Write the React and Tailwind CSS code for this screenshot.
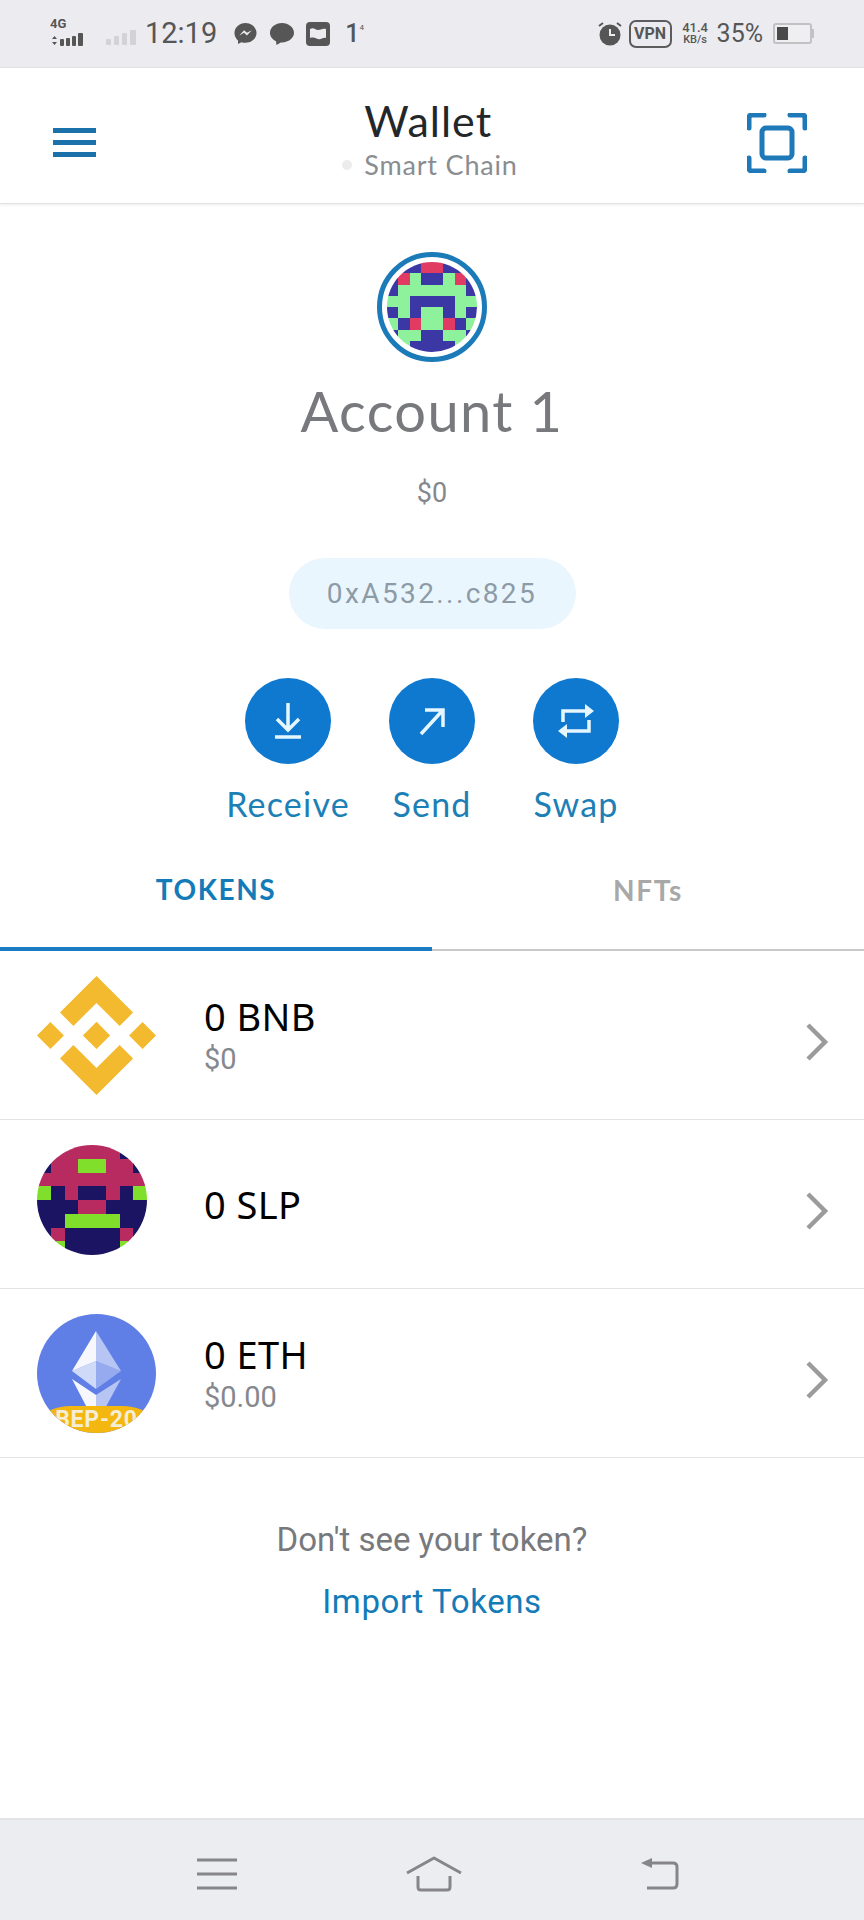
const avatarRows = [
  'xpprrppx',
  'prgppgrp',
  'pggggggp',
  'ggppppgg',
  'pgpggpgp',
  'gprggrpg',
  'pggppggp',
  'ggppppgg',
];
const avatarColors = { p: '#3b38a5', r: '#e13a63', g: '#8df29b' };

const slpRows = [
  'mmmmmmdm',
  'dmmggmmd',
  'mmmmmmmm',
  'gdmddmdg',
  'dddmmddd',
  'ddggggdd',
  'dmddddmd',
  'mgddddgm',
];
const slpColors = { m: '#b72b60', d: '#1b1462', g: '#7fdf2a' };

function PixelGrid({ rows, colors }) {
  return (
    <svg viewBox="0 0 8 8" shapeRendering="crispEdges" className="block w-full h-full">
      {rows.map((row, y) =>
        row.split('').map((c, x) =>
          colors[c] ? <rect key={`${x}-${y}`} x={x} y={y} width="1.02" height="1.02" fill={colors[c]} /> : null
        )
      )}
    </svg>
  );
}

function StatusBar() {
  return (
    <div className="h-[68px] shrink-0 bg-[#ebebf0] border-b border-[#e4e4e8] flex items-center justify-between pl-[50px] pr-[50px] text-[#565656] font-['Roboto',sans-serif]">
      <div className="flex items-center">
        <div className="relative w-[40px] h-[28px]">
          <span className="absolute left-0 top-[-3px] text-[13px] leading-[14px] font-bold">4G</span>
          <svg viewBox="0 0 40 28" className="absolute inset-0 w-[40px] h-[28px]" fill="#565656">
            <path d="M2 19l2.5-3 2.5 3zM2 22h5l-2.500 3z" />
            <rect x="10" y="19" width="4" height="7" rx="1" />
            <rect x="16" y="18" width="4" height="8" rx="1" />
            <rect x="22" y="16" width="4" height="10" rx="1" />
            <rect x="28" y="13" width="5" height="13" rx="1" />
          </svg>
        </div>
        <svg viewBox="0 0 32 16" className="w-[32px] h-[16px] ml-[16px] mt-[8px]" fill="#d3d3d5">
          <rect x="0" y="9" width="5" height="6" rx="1" />
          <rect x="8" y="6" width="5" height="9" rx="1" />
          <rect x="16" y="3" width="5" height="12" rx="1" />
          <rect x="24" y="0" width="6" height="15" rx="1" />
        </svg>
        <span className="ml-[7px] text-[29px] leading-none">12:19</span>
        <svg viewBox="0 0 24 24" className="ml-[17px] w-[23px] h-[23px]" fill="#565656">
          <path d="M12 1C5.600 1 .5 5.600 .5 11.500c0 3.100 1.400 5.800 3.700 7.700V23l3.500-2c1.300 .4 2.800 .6 4.300 .6 6.400 0 11.500-4.600 11.500-10.100S18.400 1 12 1z" />
          <path d="M5.500 14l5-5.500 3 2.800 5-2.800-5 5.500-3-2.800z" fill="#ebebf0" />
        </svg>
        <svg viewBox="0 0 24 24" className="ml-[13px] w-[24px] h-[24px]" fill="#565656">
          <path d="M12 1C5.600 1 0 5.300 0 10.800c0 3.800 2.500 6.900 6 8.500l.5 3.700 4.300-2.600h1.200c6.600 0 12-4.300 12-9.600S18.600 1 12 1z" />
        </svg>
        <svg viewBox="0 0 24 24" className="ml-[12px] w-[24px] h-[24px]">
          <rect x="0" y="0" width="24" height="24" rx="4" fill="#565656" />
          <path d="M4 7c4-2 5 1 8 1s4-2 8-1v9c-3-1-5 2-8 1s-5-2-8-1z" fill="#ebebf0" />
        </svg>
        <span className="ml-[15px] text-[25px] leading-none font-medium">1</span>
        <span className="text-[8px] leading-none mb-[12px]">4</span>
      </div>
      <div className="flex items-center">
        <svg viewBox="0 0 24 24" className="w-[24px] h-[26px] mt-[-2px]">
          <circle cx="12" cy="14" r="10.500" fill="#565656" />
          <path d="M12 8v6h5" fill="none" stroke="#ebebf0" strokeWidth="2" />
          <path d="M1 5l4-3M23 5l-4-3" stroke="#565656" strokeWidth="2" />
        </svg>
        <span className="ml-[7px] h-[28px] w-[43px] rounded-[7px] border-[2.5px] border-[#5c5c5c] flex items-center justify-center text-[16px] font-bold leading-none">VPN</span>
        <div className="ml-[9px] w-[29px] flex flex-col items-center text-[13px] leading-[12px] font-medium">
          <span>41.4</span>
          <span className="text-[11px]">KB/s</span>
        </div>
        <span className="ml-[7px] text-[25px] leading-none">35%</span>
        <div className="ml-[10px] flex items-center">
          <div className="w-[39px] h-[21px] border-2 border-[#c2c2c4] rounded-[3px] bg-[#efeff2] p-[2px]">
            <div className="w-[11px] h-full bg-[#4a4a4a]" />
          </div>
          <div className="w-[2px] h-[9px] bg-[#c2c2c4]" />
        </div>
      </div>
    </div>
  );
}

function Header() {
  return (
    <div className="h-[136px] shrink-0 bg-white border-b border-[#e2e2e2] shadow-[0_1px_3px_rgba(0,0,0,0.08)] grid grid-cols-[1fr_auto_1fr] items-center pl-[53px] pr-[57px]">
      <div className="w-[43px] flex flex-col gap-[7px] mt-[14px]">
        <div className="h-[5px] bg-[#1b72aa]" />
        <div className="h-[5px] bg-[#1b72aa]" />
        <div className="h-[5px] bg-[#1b72aa]" />
      </div>
      <div className="flex flex-col items-start mt-[5px] font-['Lato',sans-serif]">
        <span className="text-[43px] leading-[50px] text-[#24272a] tracking-[1px] ml-[22px]">Wallet</span>
        <div className="mt-[3px] flex items-center text-[27px] leading-[32px] text-[#8a8d90] tracking-[0.8px]">
          <span className="w-[10px] h-[10px] rounded-full bg-[#ececec] mr-[12px]" />
          Smart Chain
        </div>
      </div>
      <svg viewBox="0 0 60 60" className="justify-self-end w-[60px] h-[60px] mt-[14px]" fill="none" stroke="#1f78b8" strokeWidth="5" strokeLinecap="round">
        <path d="M2 15V5q0-3 3-3h12M43 2h12q3 0 3 3v10M58 45v10q0 3-3 3H43M17 58H5q-3 0-3-3V45" />
        <rect x="15" y="15" width="30" height="30" rx="4" />
      </svg>
    </div>
  );
}

function ActionButton({ label, children }) {
  return (
    <div className="w-[144px] flex flex-col items-center">
      <div className="w-[86px] h-[86px] rounded-full bg-[#0e79cf] flex items-center justify-center">
        <svg viewBox="0 0 48 48" className="w-[48px] h-[48px]" fill="none" stroke="#e6f6ff" strokeWidth="3.500">
          {children}
        </svg>
      </div>
      <span className="mt-[19px] text-[34px] leading-[42px] text-[#1c80b6] font-['Lato',sans-serif] tracking-[1.2px]">{label}</span>
    </div>
  );
}

function Chevron() {
  return (
    <svg viewBox="0 0 24 38" className="w-[24px] h-[38px] mt-[14px]" fill="none" stroke="#9b9b9b" strokeWidth="4.500">
      <path d="M3 2l17 17L3 36" />
    </svg>
  );
}

function TokenRow({ icon, name, value }) {
  return (
    <div className="h-[169px] shrink-0 border-b border-[#e3e3e3] flex items-center pl-[37px] pr-[35px]">
      <div className="w-[167px] shrink-0">{icon}</div>
      <div className="flex-1 flex flex-col font-['Noto_Sans',sans-serif]">
        <span className="text-[38px] leading-[46px] text-black tracking-[0.4px]">{name}</span>
        {value && <span className="mt-[2px] text-[29px] leading-[36px] text-[#85888c] font-['Roboto',sans-serif]">{value}</span>}
      </div>
      <Chevron />
    </div>
  );
}

function BnbIcon() {
  return (
    <svg viewBox="0 0 126.610 126.610" className="w-[119px] h-[119px] block" fill="#f3ba2f">
      <path d="M38.730 53.200l24.590-24.580 24.600 24.600 14.300-14.310L63.320 0 24.430 38.900zM0 63.310l14.300-14.310 14.310 14.310-14.310 14.300zM38.730 73.410l24.590 24.580 24.600-24.600 14.310 14.290-38.900 38.910-38.910-38.880-.02-.02zM97.990 63.310l14.300-14.310 14.320 14.300-14.310 14.320zM77.830 63.300L63.320 48.780 52.590 59.510l-1.240 1.230-2.540 2.540 14.510 14.500 14.510-14.470z" />
    </svg>
  );
}

function EthIcon() {
  return (
    <div className="relative w-[119px] h-[119px] rounded-full overflow-hidden bg-[#5f7fe6]">
      <svg viewBox="0 0 119 119" className="absolute inset-0 w-full h-full">
        <path d="M59 17L35 57l24-10z" fill="#fff" fillOpacity="0.95" />
        <path d="M59 17v30l25 10z" fill="#fff" fillOpacity="0.55" />
        <path d="M35 57l24-10v28z" fill="#fff" fillOpacity="0.7" />
        <path d="M59 47l25 10-25 18z" fill="#fff" fillOpacity="0.35" />
        <path d="M35 65l24 16v30z" fill="#fff" fillOpacity="0.95" />
        <path d="M84 65L59 81v30z" fill="#fff" fillOpacity="0.55" />
      </svg>
      <div className="absolute left-[-14px] right-[-14px] bottom-[-20px] h-[47px] rounded-t-[70px] bg-[#f4b70f] flex justify-center">
        <span className="mt-[1px] text-[23px] leading-[26px] font-bold text-[#f5edd6] font-['Roboto',sans-serif] tracking-[0.8px]">BEP-20</span>
      </div>
    </div>
  );
}

export default function App() {
  return (
    <div className="w-[864px] h-[1920px] bg-white flex flex-col overflow-hidden">
      <StatusBar />
      <Header />

      <div className="flex flex-col items-center">
        <div className="mt-[48px] w-[110px] h-[110px] rounded-full border-[5px] border-[#1b7ab8] p-[5px]">
          <div className="w-full h-full rounded-full overflow-hidden">
            <PixelGrid rows={avatarRows} colors={avatarColors} />
          </div>
        </div>
        <span className="mt-[15px] text-[56px] leading-[68px] text-[#77797c] font-['Lato',sans-serif] tracking-[1.4px]">Account 1</span>
        <span className="mt-[31px] text-[27px] leading-[34px] text-[#85888c] font-['Roboto',sans-serif]">$0</span>
        <div className="mt-[48px] w-[287px] h-[71px] rounded-full bg-[#eaf6fe] flex items-center justify-center text-[28px] text-[#8d9ba6] tracking-[2.4px] font-['Roboto',sans-serif]">
          0xA532...c825
        </div>
        <div className="mt-[49px] flex">
          <ActionButton label="Receive">
            <path d="M24 6v26M13 22l11 11 11-11M11 40h26" />
          </ActionButton>
          <ActionButton label="Send">
            <path d="M13 37l22-24M17 13h18v17" />
          </ActionButton>
          <ActionButton label="Swap">
            <path d="M11 25V14h24M11 34h26V23" />
            <path d="M33 7l9 7-9 7z" fill="#e6f6ff" stroke="none" />
            <path d="M15 27l-9 7 9 7z" fill="#e6f6ff" stroke="none" />
          </ActionButton>
        </div>
      </div>

      <div className="mt-[23px] flex h-[103px] shrink-0 border-b-2 border-[#c9c9c9] font-['Lato',sans-serif] text-[28px] font-bold tracking-[1.600px]">
        <div className="flex-1 flex items-center justify-center pb-[18px] text-[#137bb7] border-b-4 border-[#1b7cc4] mb-[-2px]">TOKENS</div>
        <div className="flex-1 flex items-center justify-center pb-[18px] text-[#a8a8a8]">NFTs</div>
      </div>

      <TokenRow icon={<BnbIcon />} name="0 BNB" value="$0" />
      <TokenRow
        icon={
          <div className="w-[110px] h-[110px] rounded-full overflow-hidden mb-[8px]">
            <PixelGrid rows={slpRows} colors={slpColors} />
          </div>
        }
        name="0 SLP"
      />
      <TokenRow icon={<EthIcon />} name="0 ETH" value="$0.00" />

      <div className="flex flex-col items-center font-['Roboto',sans-serif]">
        <span className="mt-[62px] text-[33px] leading-[40px] text-[#77797c]">Don't see your token?</span>
        <span className="mt-[22px] text-[33px] leading-[40px] text-[#137bb7] tracking-[0.6px]">Import Tokens</span>
      </div>

      <div className="flex-1" />

      <div className="h-[102px] shrink-0 bg-[#ecedf1] border-t-2 border-[#e4e4e6] flex items-center justify-between pt-[8px] pl-[196px] pr-[185px]">
        <svg viewBox="0 0 42 32" className="w-[42px] h-[32px]" fill="none" stroke="#86868a" strokeWidth="3">
          <path d="M1 2h40M1 16h40M1 30h40" />
        </svg>
        <svg viewBox="0 0 56 36" className="w-[56px] h-[36px] mr-[11px]" fill="none" stroke="#86868a" strokeWidth="3" strokeLinejoin="round">
          <path d="M1 17L28 2l27 15" />
          <path d="M12 20v11q0 3 3 3h26q3 0 3-3V20" />
        </svg>
        <svg viewBox="0 0 38 32" className="w-[38px] h-[32px]" fill="none" stroke="#86868a" strokeWidth="3">
          <path d="M8 5h24q4 0 4 4v17q0 4-4 4H6" />
          <path d="M0 5l11-5v10z" fill="#86868a" stroke="none" />
        </svg>
      </div>
    </div>
  );
}
